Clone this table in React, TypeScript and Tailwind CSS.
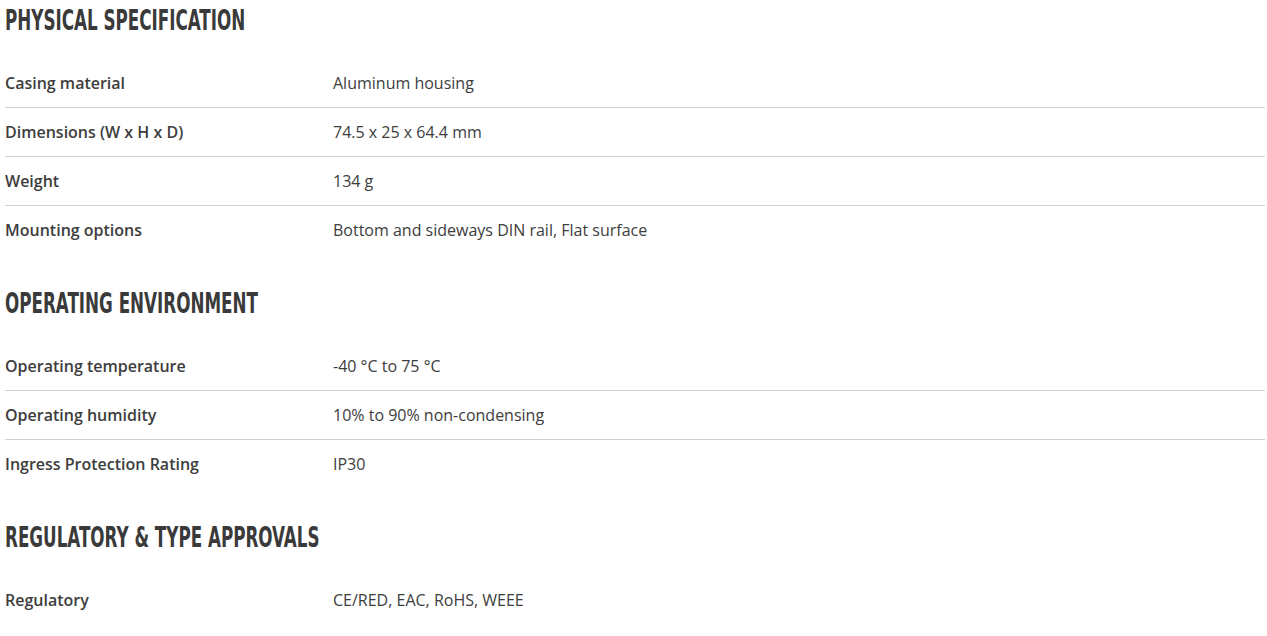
import React from "react";

type Row = [string, string];
const sections: { title: string; rows: Row[] }[] = [
  {
    title: "PHYSICAL SPECIFICATION",
    rows: [
      ["Casing material", "Aluminum housing"],
      ["Dimensions (W x H x D)", "74.5 x 25 x 64.4 mm"],
      ["Weight", "134 g"],
      ["Mounting options", "Bottom and sideways DIN rail, Flat surface"],
    ],
  },
  {
    title: "OPERATING ENVIRONMENT",
    rows: [
      ["Operating temperature", "-40 °C to 75 °C"],
      ["Operating humidity", "10% to 90% non-condensing"],
      ["Ingress Protection Rating", "IP30"],
    ],
  },
  {
    title: "REGULATORY & TYPE APPROVALS",
    rows: [["Regulatory", "CE/RED, EAC, RoHS, WEEE"]],
  },
];

export default function App() {
  return (
    <div className="w-[1267px] h-[636px] overflow-hidden bg-white pl-[5px] pr-[2px] text-[#3d3d3d] font-['Open_Sans',sans-serif]">
      <div className="flex flex-col gap-[29px]">
        {sections.map((s) => (
          <section key={s.title} className="flex flex-col">
            <h2 className="h-[40px] flex items-center pt-[1px]">
              <span className="inline-block origin-left scale-x-[0.665] text-[28px] font-bold text-[#3a3a3a] font-['Liberation_Sans_Narrow','DejaVu_Sans_Condensed',sans-serif]">
                {s.title}
              </span>
            </h2>
            <div className="mt-[19px] flex flex-col">
              {s.rows.map(([k, v], i) => (
                <div
                  key={k}
                  className={`flex h-[48px] box-content items-center text-[16px] ${
                    i < s.rows.length - 1 ? "border-b border-[#d0d0d0]" : ""
                  }`}
                >
                  <div className="w-[328px] font-semibold">{k}</div>
                  <div>{v}</div>
                </div>
              ))}
            </div>
          </section>
        ))}
      </div>
    </div>
  );
}
